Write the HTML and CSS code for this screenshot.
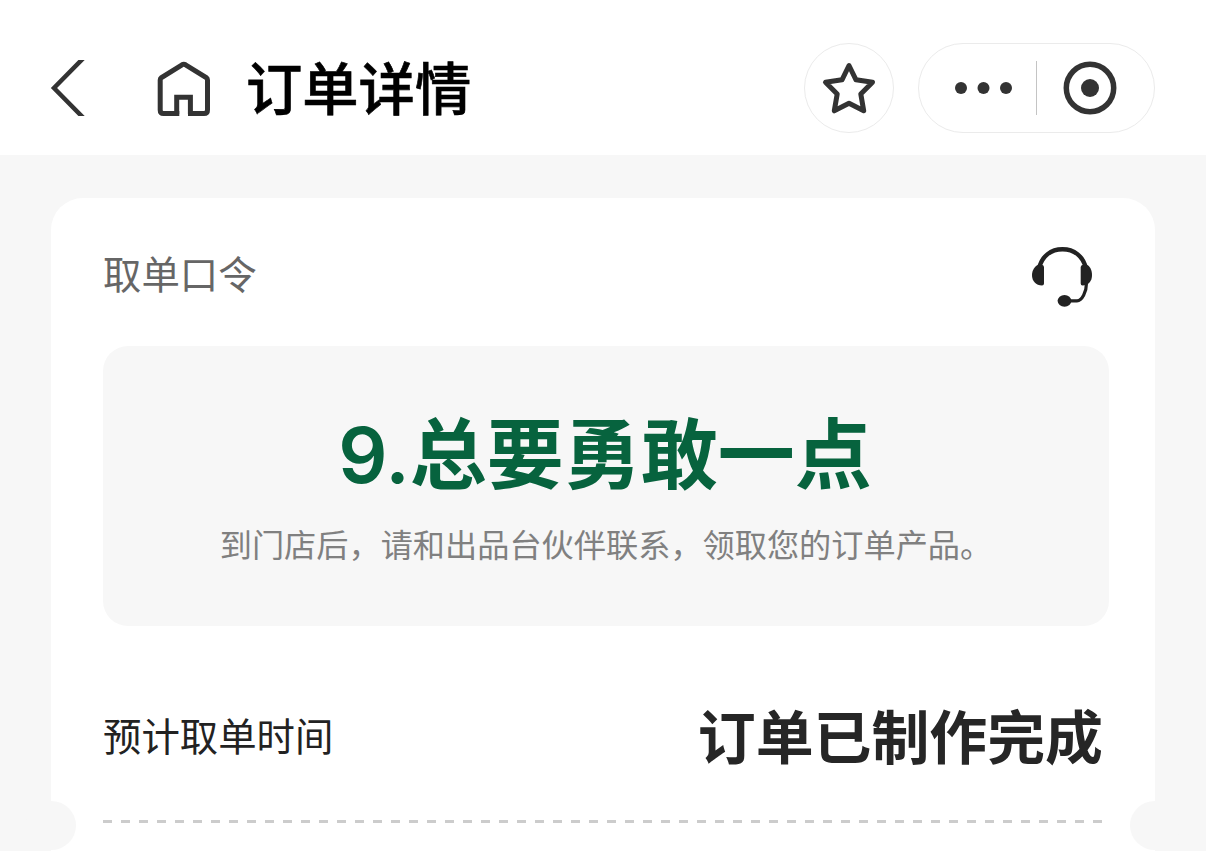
FILE: index.html
```html
<!DOCTYPE html>
<html lang="zh-CN">
<head>
    <meta charset="UTF-8">
    <meta name="viewport" content="width=device-width, initial-scale=1.0">
    <title>订单详情</title>
    <link rel="stylesheet" href="styles.css">
</head>
<body>
    <header class="navbar">
        <svg class="back" viewBox="0 0 36 56" width="36" height="56">
            <path d="M35.500 -3 L5 28 L35.500 59" />
        </svg>
        <svg class="home" viewBox="0 0 56 58" width="56" height="58">
            <path d="M24.300 54.500 H8.500 Q5.200 54.500 5.200 51 V21 Q5.200 19.500 6.500 18.500 L27 5.800 Q28.800 4.800 30.600 5.800 L51.200 18.500 Q52.500 19.500 52.500 21 V51 Q52.500 54.500 49 54.500 H33" />
            <path d="M21.700 55 V38.200 H35.400 V55" />
        </svg>
        <h1 class="title">订单详情</h1>
        <div class="favorite">
            <svg viewBox="0 0 56 54" width="56" height="54">
                <path d="M28 4.5 L35 18.800 L51.500 21.2 L39.800 33 L42.700 49.800 L28 42.300 L13.300 49.800 L16.200 33 L4.500 21.2 L21 18.800 Z" />
            </svg>
        </div>
        <div class="capsule">
            <svg class="more" viewBox="0 0 58 14" width="58" height="14">
                <circle cx="7" cy="7" r="6" />
                <circle cx="29.500" cy="7" r="6" />
                <circle cx="52" cy="7" r="6" />
            </svg>
            <span class="split"></span>
            <svg class="close" viewBox="0 0 54 54" width="54" height="54">
                <circle class="ring" cx="27" cy="27" r="23.7" />
                <circle cx="27" cy="27" r="9" />
            </svg>
        </div>
    </header>

    <main class="card">
        <div class="card-head">
            <span class="label">取单口令</span>
            <svg class="service" viewBox="0 0 62 62" width="62" height="62">
                <path class="band" d="M8.200 22 C11 10 20 3.200 31.500 3.200 C43 3.200 52 10 54.800 22" />
                <path d="M10.500 18.500 Q13 19 13 21 V37.500 Q13 39.500 11 39.500 C5 39.500 1 35 1 29 C1 24 4 20 7.500 18.500 Z" />
                <path d="M52.500 18.500 Q49.700 19 49.700 21 V37.500 Q49.700 39.500 51.500 39.500 C57.500 39.500 61 35 61 29 C61 24 59 20 55.500 18.500 Z" />
                <path class="mic" d="M55.500 37 C55.500 46 51 54.800 46 54.800 H36" />
                <ellipse cx="33.500" cy="54.800" rx="6.900" ry="5.900" />
            </svg>
        </div>

        <section class="code-box">
            <div class="code">9.总要勇敢一点</div>
            <p class="hint">到门店后，请和出品台伙伴联系，领取您的订单产品。</p>
        </section>

        <div class="status-row">
            <span class="status-label">预计取单时间</span>
            <strong class="status">订单已制作完成</strong>
        </div>

        <div class="divider"></div>
        <span class="notch notch-left"></span>
        <span class="notch notch-right"></span>
    </main>
</body>
</html>
```
FILE: styles.css
```css
* {
    box-sizing: border-box;
}
body {
    margin: 0;
    height: 851px;
    overflow: hidden;
    background: #f7f7f7;
    font-family: "Noto Sans CJK SC", sans-serif;
}
.navbar {
    display: flex;
    align-items: center;
    height: 155px;
    padding: 21px 51px 0 49px;
    background: #fff;
}
.navbar svg {
    fill: #333;
}
.navbar .back,
.navbar .home {
    fill: none;
    stroke: #333;
    stroke-width: 4.5;
}
.navbar .home {
    margin-left: 70px;
    stroke-width: 5;
}
.title {
    margin: 0 auto 0 35px;
    padding-bottom: 4px;
    color: #000;
    font-size: 56.3px;
    font-weight: 500;
    line-height: 80px;
    -webkit-text-stroke: 0.6px #000;
}
.favorite {
    display: flex;
    align-items: center;
    justify-content: center;
    width: 90px;
    height: 90px;
    border: 1px solid #ebebeb;
    border-radius: 50%;
}
.favorite svg {
    fill: none;
    stroke: #333;
    stroke-width: 5;
    stroke-linejoin: round;
}
.capsule {
    display: flex;
    align-items: center;
    width: 237px;
    height: 90px;
    margin-left: 24px;
    padding-left: 35px;
    border: 1px solid #ebebeb;
    border-radius: 45px;
}
.split {
    width: 1px;
    height: 54px;
    margin: 0 26px 0 24px;
    background: #c4c4c4;
}
.navbar .ring {
    fill: none;
    stroke: #333;
    stroke-width: 5.5;
}
.card {
    position: relative;
    height: 670px;
    margin: 43px 51px 0;
    padding: 48px 46px 0 52px;
    background: #fff;
    border-radius: 32px 32px 0 0;
}
.card-head {
    display: flex;
    justify-content: space-between;
    height: 100px;
    padding-right: 16px;
}
.label {
    color: #666;
    font-size: 38.4px;
    line-height: 52px;
}
.service {
    fill: #222;
}
.service .band,
.service .mic {
    fill: none;
    stroke: #222;
    stroke-width: 4.4;
}
.service .mic {
    stroke-width: 3.2;
}
.code-box {
    height: 280px;
    padding-top: 54px;
    background: #f7f7f7;
    border-radius: 25px;
    text-align: center;
}
.code {
    padding-right: 2px;
    color: #07633e;
    font-family: Inter, "Noto Sans CJK SC", sans-serif;
    font-size: 77px;
    font-weight: 600;
    line-height: 110px;
}
.hint {
    margin: 10px 0 0;
    color: #808080;
    font-size: 32.2px;
    line-height: 46px;
}
.status-row {
    display: flex;
    align-items: center;
    justify-content: space-between;
    height: 194px;
    padding: 22px 6px 0 0;
}
.status-label {
    color: #222;
    font-size: 38.4px;
}
.status {
    color: #262626;
    font-size: 57.9px;
    font-weight: 700;
}
.divider {
    height: 3px;
    background: repeating-linear-gradient(to right, #ccc 0 9px, transparent 9px 18px);
}
.notch {
    position: absolute;
    top: 603px;
    width: 50px;
    height: 49px;
    background: #f7f7f7;
    border-radius: 50%;
}
.notch-left {
    left: -25px;
}
.notch-right {
    right: -25px;
}
```
